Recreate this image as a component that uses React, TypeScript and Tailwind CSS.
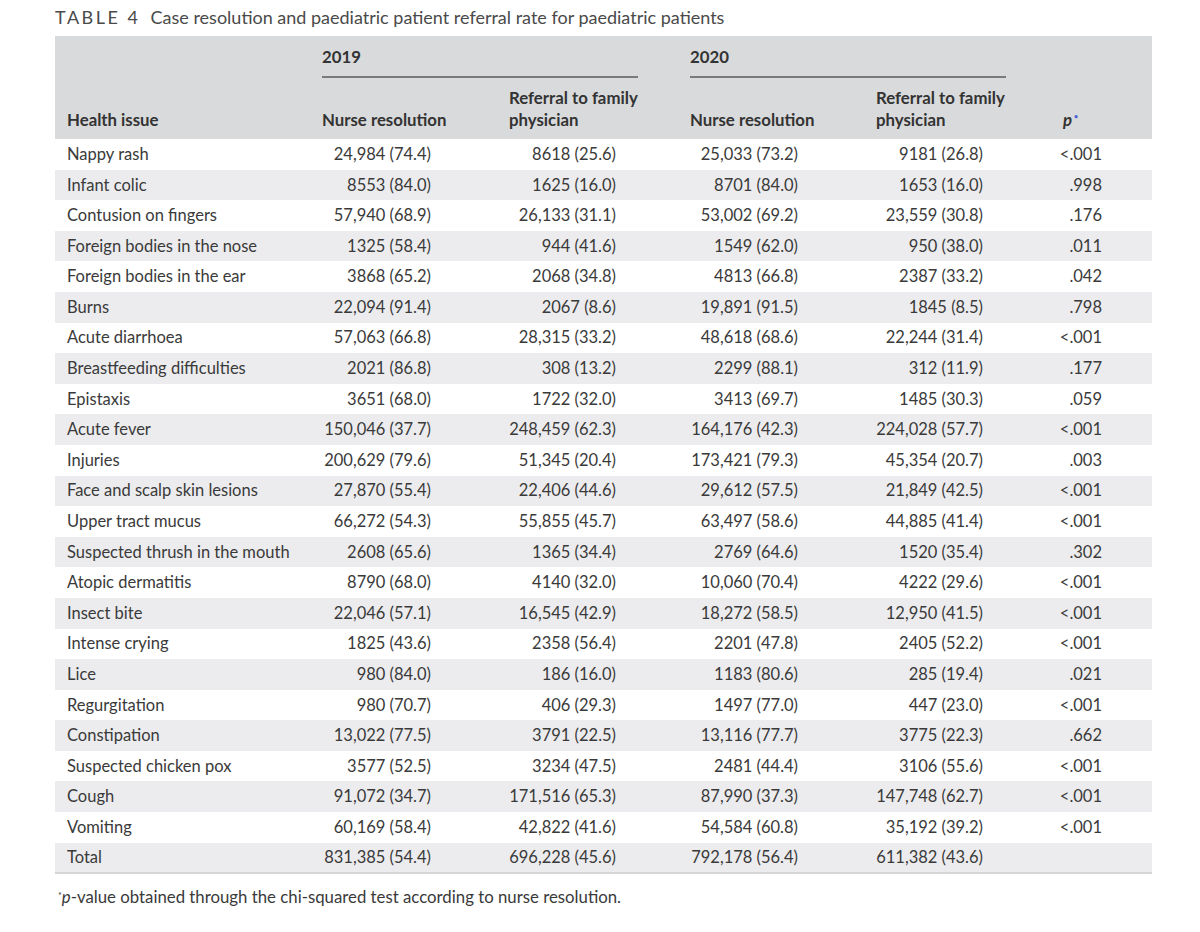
import React from "react";

type Row = {
  issue: string;
  n19: string;
  r19: string;
  n20: string;
  r20: string;
  p: string;
};

const rows: Row[] = [
  { issue: "Nappy rash", n19: "24,984 (74.4)", r19: "8618 (25.6)", n20: "25,033 (73.2)", r20: "9181 (26.8)", p: "<.001" },
  { issue: "Infant colic", n19: "8553 (84.0)", r19: "1625 (16.0)", n20: "8701 (84.0)", r20: "1653 (16.0)", p: ".998" },
  { issue: "Contusion on fingers", n19: "57,940 (68.9)", r19: "26,133 (31.1)", n20: "53,002 (69.2)", r20: "23,559 (30.8)", p: ".176" },
  { issue: "Foreign bodies in the nose", n19: "1325 (58.4)", r19: "944 (41.6)", n20: "1549 (62.0)", r20: "950 (38.0)", p: ".011" },
  { issue: "Foreign bodies in the ear", n19: "3868 (65.2)", r19: "2068 (34.8)", n20: "4813 (66.8)", r20: "2387 (33.2)", p: ".042" },
  { issue: "Burns", n19: "22,094 (91.4)", r19: "2067 (8.6)", n20: "19,891 (91.5)", r20: "1845 (8.5)", p: ".798" },
  { issue: "Acute diarrhoea", n19: "57,063 (66.8)", r19: "28,315 (33.2)", n20: "48,618 (68.6)", r20: "22,244 (31.4)", p: "<.001" },
  { issue: "Breastfeeding difficulties", n19: "2021 (86.8)", r19: "308 (13.2)", n20: "2299 (88.1)", r20: "312 (11.9)", p: ".177" },
  { issue: "Epistaxis", n19: "3651 (68.0)", r19: "1722 (32.0)", n20: "3413 (69.7)", r20: "1485 (30.3)", p: ".059" },
  { issue: "Acute fever", n19: "150,046 (37.7)", r19: "248,459 (62.3)", n20: "164,176 (42.3)", r20: "224,028 (57.7)", p: "<.001" },
  { issue: "Injuries", n19: "200,629 (79.6)", r19: "51,345 (20.4)", n20: "173,421 (79.3)", r20: "45,354 (20.7)", p: ".003" },
  { issue: "Face and scalp skin lesions", n19: "27,870 (55.4)", r19: "22,406 (44.6)", n20: "29,612 (57.5)", r20: "21,849 (42.5)", p: "<.001" },
  { issue: "Upper tract mucus", n19: "66,272 (54.3)", r19: "55,855 (45.7)", n20: "63,497 (58.6)", r20: "44,885 (41.4)", p: "<.001" },
  { issue: "Suspected thrush in the mouth", n19: "2608 (65.6)", r19: "1365 (34.4)", n20: "2769 (64.6)", r20: "1520 (35.4)", p: ".302" },
  { issue: "Atopic dermatitis", n19: "8790 (68.0)", r19: "4140 (32.0)", n20: "10,060 (70.4)", r20: "4222 (29.6)", p: "<.001" },
  { issue: "Insect bite", n19: "22,046 (57.1)", r19: "16,545 (42.9)", n20: "18,272 (58.5)", r20: "12,950 (41.5)", p: "<.001" },
  { issue: "Intense crying", n19: "1825 (43.6)", r19: "2358 (56.4)", n20: "2201 (47.8)", r20: "2405 (52.2)", p: "<.001" },
  { issue: "Lice", n19: "980 (84.0)", r19: "186 (16.0)", n20: "1183 (80.6)", r20: "285 (19.4)", p: ".021" },
  { issue: "Regurgitation", n19: "980 (70.7)", r19: "406 (29.3)", n20: "1497 (77.0)", r20: "447 (23.0)", p: "<.001" },
  { issue: "Constipation", n19: "13,022 (77.5)", r19: "3791 (22.5)", n20: "13,116 (77.7)", r20: "3775 (22.3)", p: ".662" },
  { issue: "Suspected chicken pox", n19: "3577 (52.5)", r19: "3234 (47.5)", n20: "2481 (44.4)", r20: "3106 (55.6)", p: "<.001" },
  { issue: "Cough", n19: "91,072 (34.7)", r19: "171,516 (65.3)", n20: "87,990 (37.3)", r20: "147,748 (62.7)", p: "<.001" },
  { issue: "Vomiting", n19: "60,169 (58.4)", r19: "42,822 (41.6)", n20: "54,584 (60.8)", r20: "35,192 (39.2)", p: "<.001" },
  { issue: "Total", n19: "831,385 (54.4)", r19: "696,228 (45.6)", n20: "792,178 (56.4)", r20: "611,382 (43.6)", p: "" },
];

export default function App() {
  return (
    <div className="min-h-[932px] bg-white pl-[55px] pt-[6px] font-['Lato','Liberation_Sans',sans-serif] text-[#3a3a3a]">
      <div className="whitespace-nowrap text-[18px] leading-[22px] text-[#4a4a4a]">
        <span className="tracking-[0.14em]">TABLE 4</span>
        <span className="ml-[10px]">Case resolution and paediatric patient referral rate for paediatric patients</span>
      </div>

      <table className="mt-[8px] w-[1097px] table-fixed border-collapse text-[16.5px]">
        <colgroup>
          <col className="w-[255px]" />
          <col className="w-[187px]" />
          <col className="w-[181px]" />
          <col className="w-[186px]" />
          <col className="w-[187px]" />
          <col className="w-[101px]" />
        </colgroup>
        <thead className="bg-[#d9dadc] text-[16.8px] font-bold text-[#333]">
          <tr>
            <th />
            <th colSpan={2} className="pl-3 pt-[10px] text-left align-top font-bold">
              <div className="leading-[22px]">2019</div>
              <div className="mt-[8px] h-[2px] w-[316px] bg-[#7a7a7a]" />
            </th>
            <th colSpan={2} className="pl-3 pt-[10px] text-left align-top font-bold">
              <div className="leading-[22px]">2020</div>
              <div className="mt-[8px] h-[2px] w-[316px] bg-[#7a7a7a]" />
            </th>
            <th />
          </tr>
          <tr className="leading-[22px]">
            <th className="pl-3 pt-[9px] pb-[8px] text-left align-bottom font-bold">Health issue</th>
            <th className="pl-3 pt-[9px] pb-[8px] text-left align-bottom font-bold">Nurse resolution</th>
            <th className="pl-3 pt-[9px] pb-[8px] text-left align-bottom font-bold">
              Referral to family
              <br />
              physician
            </th>
            <th className="pl-3 pt-[9px] pb-[8px] text-left align-bottom font-bold">Nurse resolution</th>
            <th className="pl-3 pt-[9px] pb-[8px] text-left align-bottom font-bold">
              Referral to family
              <br />
              physician
            </th>
            <th className="pl-3 pt-[9px] pb-[8px] text-left align-bottom font-bold italic">
              p<sup className="relative -top-[7px] ml-[2px] text-[7px] not-italic text-[#4b5bd6]">•</sup>
            </th>
          </tr>
        </thead>
        <tbody className="border-b-2 border-[#d6d6d6]">
          {rows.map((r, i) => (
            <tr key={r.issue} className={i % 2 === 1 ? "h-[30.6px] bg-[#ececee]" : "h-[30.6px]"}>
              <td className="whitespace-nowrap pl-3">{r.issue}</td>
              <td className="whitespace-nowrap pr-[66px] text-right">{r.n19}</td>
              <td className="whitespace-nowrap pr-[62px] text-right">{r.r19}</td>
              <td className="whitespace-nowrap pr-[66px] text-right">{r.n20}</td>
              <td className="whitespace-nowrap pr-[68px] text-right">{r.r20}</td>
              <td className="whitespace-nowrap pr-[50px] text-right">{r.p}</td>
            </tr>
          ))}
        </tbody>
      </table>

      <p className="mt-[10px] pl-[3px] text-[16.8px] text-[#3a3a3a]">
        <sup className="text-[9px]">*</sup>
        <i>p</i>-value obtained through the chi-squared test according to nurse resolution.
      </p>
    </div>
  );
}
